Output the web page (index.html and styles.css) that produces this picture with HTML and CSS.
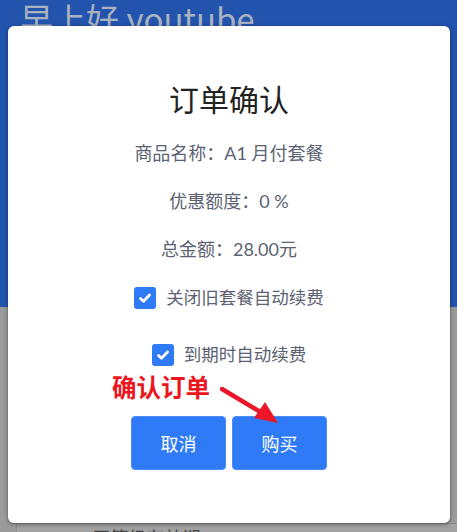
FILE: index.html
```html
<!DOCTYPE html>
<html lang="zh-CN">
<head>
<meta charset="utf-8">
<title>订单确认</title>
<link rel="stylesheet" href="styles.css">
</head>
<body>
<div class="page">
  <header class="hero">
    <h1 class="greeting">早上好 youtube</h1>
  </header>
  <section class="content">
    <div class="card">
      <p class="card-text">30 天等级有效期</p>
    </div>
  </section>
</div>

<div class="dialog">
  <h2 class="dialog-title">订单确认</h2>
  <p class="info">商品名称：A1 月付套餐</p>
  <p class="info">优惠额度：0 %</p>
  <p class="info">总金额：28.00元</p>
  <label class="check-row first">
    <span class="check-box"><svg viewBox="0 0 22 22" width="22" height="22"><path d="M6.5 11.5 L9.5 14.3 L15.5 8" fill="none" stroke="#fff" stroke-width="2.8" stroke-linecap="round" stroke-linejoin="round"/></svg></span>
    <span class="check-label">关闭旧套餐自动续费</span>
  </label>
  <label class="check-row second">
    <span class="check-box"><svg viewBox="0 0 22 22" width="22" height="22"><path d="M6.5 11.5 L9.5 14.3 L15.5 8" fill="none" stroke="#fff" stroke-width="2.8" stroke-linecap="round" stroke-linejoin="round"/></svg></span>
    <span class="check-label">到期时自动续费</span>
  </label>
  <div class="actions">
    <button class="btn">取消</button>
    <button class="btn">购买</button>
  </div>
  <div class="annotation">确认订单</div>
  <svg class="arrow" width="80" height="50" viewBox="0 0 80 50">
    <line x1="2" y1="3" x2="42" y2="27" stroke="#ec1628" stroke-width="4.5" stroke-linecap="round"/>
    <polygon points="58,37 34,32 45,16" fill="#ec1628"/>
  </svg>
</div>
</body>
</html>
```

FILE: styles.css
```css
html, body {
  margin: 0;
  padding: 0;
}
body {
  width: 457px;
  height: 532px;
  overflow: hidden;
  position: relative;
  background: #9b9b9b;
  font-family: "Lato", "Noto Sans CJK SC", sans-serif;
}
.page {
  display: flex;
  flex-direction: column;
}
.hero {
  height: 307px;
  background: #2254ad;
  padding: 0 20px;
  box-sizing: border-box;
}
.greeting {
  margin: 0;
  font-family: "Noto Sans CJK SC", sans-serif;
  font-weight: 400;
  font-size: 33px;
  line-height: 44px;
  margin-top: -4px;
  color: #aab1c0;
}
.content {
  padding: 0 0 0 16px;
}
.card {
  margin-top: 216px;
  background: #a1a1a1;
  border-left: 1px solid #8e8e8e;
  border-top: 1px solid #8a8a8a;
  padding: 0 0 0 50px;
}
.card-text {
  margin: 0;
  font-size: 18px;
  line-height: 26px;
  color: #444;
  padding-top: 1px;
}
.dialog {
  position: absolute;
  left: 8px;
  top: 26px;
  width: 442px;
  height: 497px;
  background: #fff;
  border-radius: 6px;
  box-shadow: 0 1px 4px rgba(0, 0, 0, 0.45);
  display: flex;
  flex-direction: column;
  align-items: center;
}
.dialog-title {
  margin: 52px 0 0;
  font-family: "Noto Sans CJK SC", sans-serif;
  font-weight: 400;
  font-size: 30px;
  line-height: 40px;
  color: #222;
}
.info {
  margin: 23px 0 0;
  font-size: 18px;
  line-height: 24px;
  color: #5b6271;
}
.info + .info {
  margin-top: 24px;
}
.check-row {
  display: flex;
  align-items: center;
  gap: 10px;
  height: 24px;
}
.check-row.first {
  margin-top: 25px;
}
.check-row.second {
  margin-top: 33px;
}
.check-box {
  width: 22px;
  height: 22px;
  border-radius: 3px;
  background: #2f7bf6;
  display: flex;
}
.check-label {
  font-size: 17.5px;
  line-height: 24px;
  color: #5b6271;
}
.actions {
  display: flex;
  gap: 6px;
  margin-top: 49px;
}
.btn {
  width: 95px;
  height: 54px;
  border: 1px solid #4b8cf5;
  border-radius: 4px;
  background: #2f7bf7;
  color: #fff;
  font-family: "Noto Sans CJK SC", sans-serif;
  font-size: 18px;
  padding: 0;
}
.annotation {
  position: absolute;
  left: 104px;
  top: 343px;
  font-family: "Noto Sans CJK SC", sans-serif;
  font-weight: 700;
  font-size: 24.5px;
  line-height: 36px;
  color: #ec1620;
}
.arrow {
  position: absolute;
  left: 212px;
  top: 360px;
}
```
